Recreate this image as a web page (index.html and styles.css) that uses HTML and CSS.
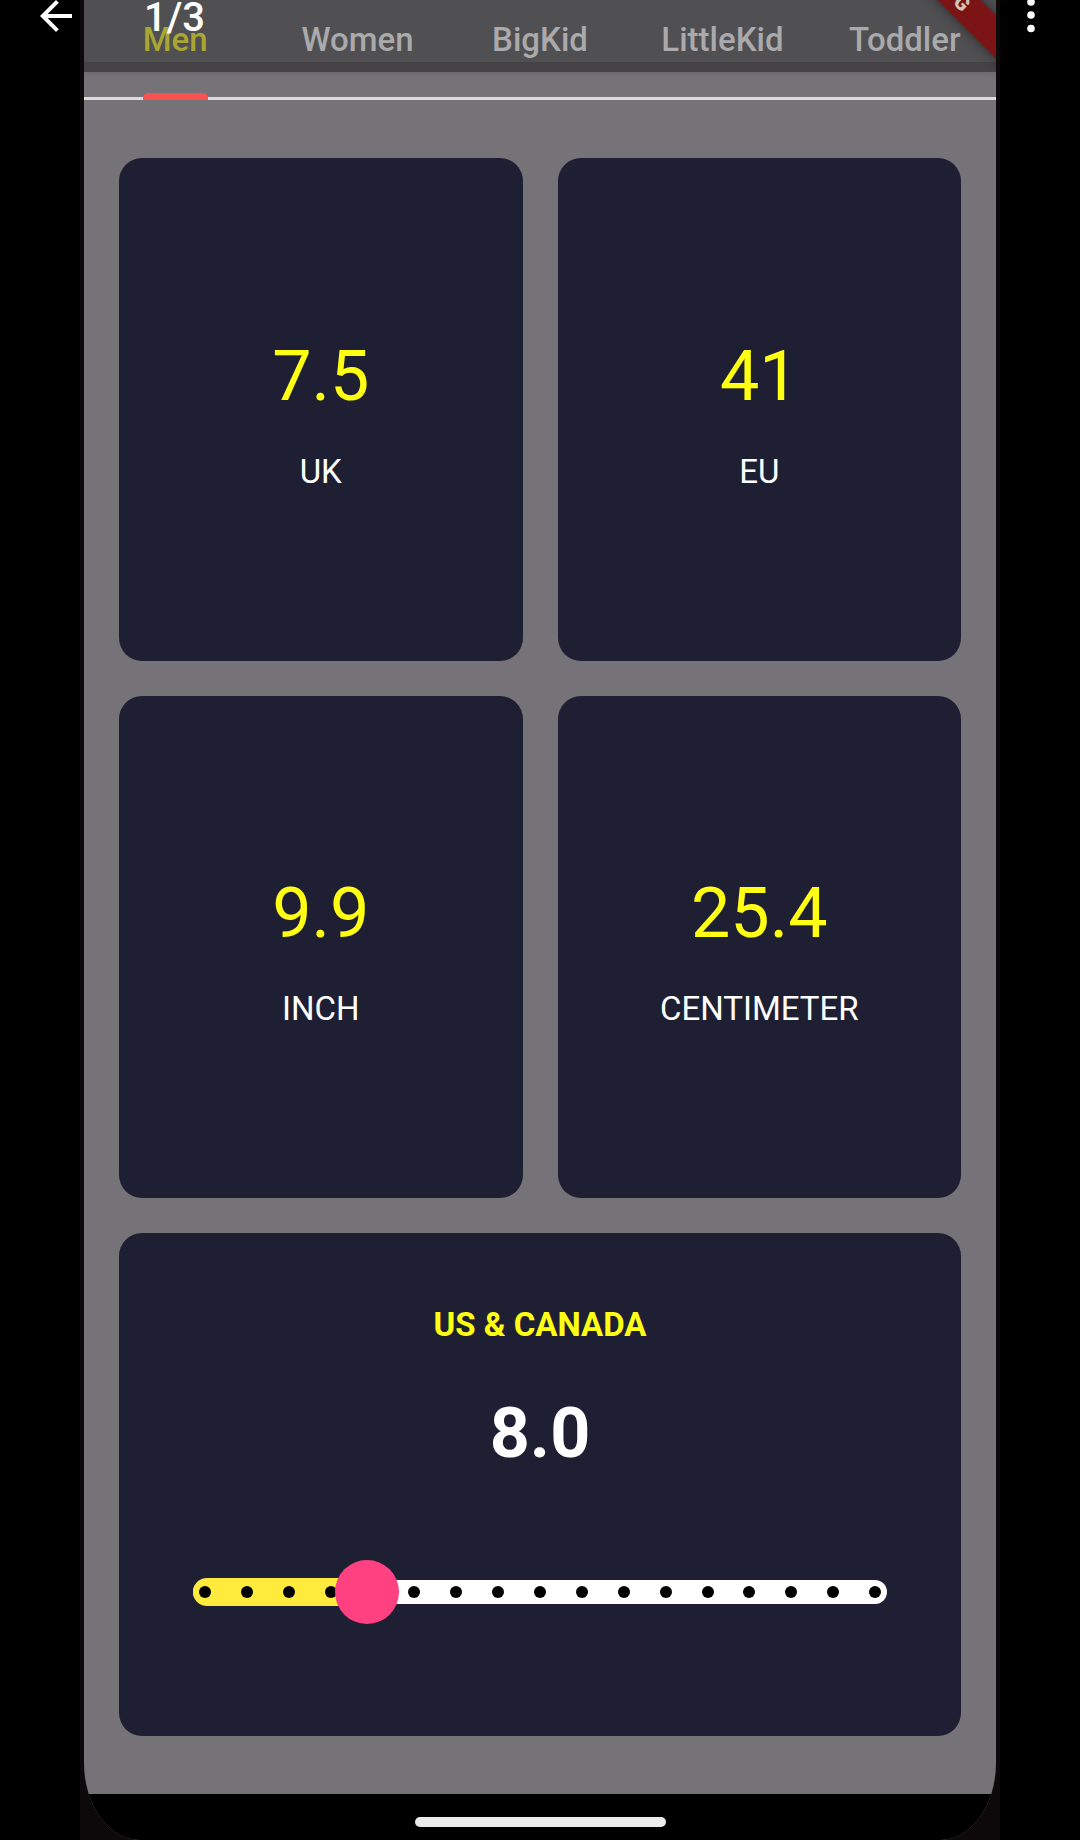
FILE: index.html
```html
<!DOCTYPE html>
<html lang="en">

<head>
    <meta charset="UTF-8">
    <meta name="viewport" content="width=device-width, initial-scale=1.0">
    <title>Shoe Size Converter</title>
    <link rel="stylesheet" href="styles.css">
</head>

<body>
    <div class="viewer">
        <button class="icon-btn back" aria-label="Back">
            <svg viewBox="0 0 24 24" width="48" height="48">
                <path fill="#fff" d="M20 11H7.83l5.59-5.59L12 4l-8 8 8 8 1.41-1.41L7.83 13H20v-2z" />
            </svg>
        </button>
        <span class="counter">1/3</span>
        <button class="icon-btn more" aria-label="More options">
            <svg viewBox="0 0 24 48" width="24" height="48">
                <circle cx="11" cy="10" r="3.8" fill="#fff" />
                <circle cx="11" cy="23" r="3.8" fill="#fff" />
                <circle cx="11" cy="36.500" r="3.8" fill="#fff" />
            </svg>
        </button>
    </div>

    <div class="device">
        <div class="screen">
            <nav class="tabs">
                <button class="tab active"><span>Men</span></button>
                <button class="tab"><span>Women</span></button>
                <button class="tab"><span>BigKid</span></button>
                <button class="tab"><span>LittleKid</span></button>
                <button class="tab"><span>Toddler</span></button>
            </nav>
            <div class="ribbon"><span>G</span></div>

            <main class="cards">
                <section class="card">
                    <div class="value">7.5</div>
                    <div class="unit">UK</div>
                </section>
                <section class="card">
                    <div class="value">41</div>
                    <div class="unit">EU</div>
                </section>
                <section class="card">
                    <div class="value">9.9</div>
                    <div class="unit">INCH</div>
                </section>
                <section class="card">
                    <div class="value">25.4</div>
                    <div class="unit">CENTIMETER</div>
                </section>
                <section class="card picker">
                    <label class="unit" for="size">US &amp; CANADA</label>
                    <output class="value" id="out" for="size">8.0</output>
                    <div class="slider">
                        <div class="track">
                            <div class="fill" id="fill" style="width: 25%"></div>
                            <div class="ticks">
                                <i></i><i></i><i></i><i></i><i></i><i></i><i></i><i></i><i></i>
                                <i></i><i></i><i></i><i></i><i></i><i></i><i></i><i></i>
                            </div>
                        </div>
                        <input type="range" id="size" min="6" max="14" step="0.5" value="8">
                    </div>
                </section>
            </main>

            <footer class="navbar">
                <div class="home"></div>
            </footer>
        </div>
    </div>

    <script>
        const size = document.getElementById("size");
        size.addEventListener("input", () => {
            document.getElementById("out").textContent = Number(size.value).toFixed(1);
            document.getElementById("fill").style.width = (size.value - 6) / 8 * 100 + "%";
        });
    </script>
</body>

</html>
```

FILE: styles.css
```css
* {
    box-sizing: border-box;
    padding: 0;
    margin: 0;
}

body {
    background: #000;
    padding: 0 80px;
    font-family: Roboto, "Liberation Sans", sans-serif;
    color: #fff;
}

button {
    background: none;
    border: 0;
    font: inherit;
    color: inherit;
    cursor: pointer;
}

svg {
    display: block;
}

/* bar that floats over the page */
.viewer {
    position: absolute;
    top: -8px;
    left: 32px;
    right: 36px;
    height: 48px;
    z-index: 2;
    display: flex;
    align-items: center;
}

.counter {
    margin-left: 64px;
    padding-top: 4px;
    font-size: 40px;
    font-weight: 500;
    line-height: 48px;
}

.more {
    margin-left: auto;
}

.device {
    background: #0d090a;
    padding: 0 4px;
}

.screen {
    position: relative;
    display: flex;
    flex-direction: column;
    min-height: 100vh;
    background: #757377;
    border-radius: 0 0 56px 56px / 0 0 77px 77px;
    overflow: hidden;
}

.tabs {
    display: flex;
    height: 100px;
    border-bottom: 3px solid #dcdbe0;
    background: linear-gradient(#505052 62px, #444245 62px, #444245 72px, #6e6c70 72px, #757377 78px);
}

.tab {
    display: flex;
    flex: 1 1 0;
    justify-content: center;
    height: 100px;
    padding-top: 20px;
    font-size: 33px;
    font-weight: 500;
    line-height: 40px;
    color: #aaa9ab;
}

.tab span {
    position: relative;
    height: 80px;
}

.tab.active {
    color: #a9a532;
}

.tab.active span::after {
    content: "";
    position: absolute;
    left: 0;
    right: 0;
    bottom: 0;
    height: 7px;
    border-radius: 5px 5px 0 0;
    background: #f9514f;
}

/* corner banner */
.ribbon {
    position: absolute;
    top: -12px;
    right: -66px;
    width: 200px;
    height: 30px;
    background: #7c1416;
    box-shadow: 0 0 12px rgba(0, 0, 0, 0.5);
    transform: rotate(45deg);
    text-align: center;
    font-size: 20px;
    font-weight: 900;
    line-height: 30px;
    color: #d3c3bb;
}

.cards {
    flex: 1;
    display: grid;
    grid-template-columns: 1fr 1fr;
    grid-auto-rows: 1fr;
    gap: 35px;
    padding: 58px 35px;
}

.card {
    display: flex;
    flex-direction: column;
    align-items: center;
    justify-content: center;
    gap: 33px;
    padding-top: 4px;
    background: #1e1f33;
    border-radius: 23px;
}

.value {
    font-size: 70px;
    line-height: 88px;
    color: #ffff14;
}

.unit {
    font-size: 33px;
    line-height: 38px;
}

.picker {
    grid-column: span 2;
    justify-content: flex-start;
    gap: 45px;
    padding: 73px 42px 0;
}

.picker .unit {
    font-weight: 700;
    color: #ffff14;
}

.picker .value {
    font-weight: 700;
    color: #fff;
}

.slider {
    display: grid;
    align-items: center;
    width: 100%;
    margin-top: 38px;
}

.slider > * {
    grid-area: 1 / 1;
}

.track {
    display: grid;
    align-items: center;
    align-content: center;
    height: 24px;
    margin: 0 32px;
    border-radius: 12px;
    background: #fff;
}

.track > * {
    grid-area: 1 / 1;
}

.fill {
    height: 28px;
    border-radius: 14px 0 0 14px;
    background: #ffeb3b;
}

.ticks {
    display: flex;
    justify-content: space-between;
    padding: 0 6px;
}

.ticks i {
    width: 12px;
    height: 12px;
    border-radius: 50%;
    background: #000;
}

input[type="range"] {
    -webkit-appearance: none;
    appearance: none;
    width: 100%;
    height: 64px;
    background: transparent;
}

input[type="range"]::-webkit-slider-thumb {
    -webkit-appearance: none;
    width: 64px;
    height: 64px;
    border-radius: 50%;
    background: #ff4081;
}

input[type="range"]::-moz-range-thumb {
    width: 64px;
    height: 64px;
    border: 0;
    border-radius: 50%;
    background: #ff4081;
}

.navbar {
    display: flex;
    align-items: center;
    justify-content: center;
    height: 46px;
    padding-top: 10px;
    background: #000;
}

.home {
    width: 251px;
    height: 10px;
    border-radius: 5px;
    background: #ebebeb;
}
```
